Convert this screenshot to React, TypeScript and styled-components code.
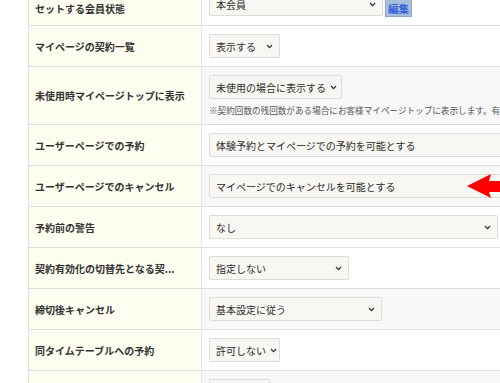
import React from "react";
import styled, { createGlobalStyle } from "styled-components";

const GlobalStyle = createGlobalStyle`
  html, body {
    margin: 0;
    padding: 0;
    background: #ffffff;
    overflow: hidden;
  }
  body {
    font-family: "Noto Sans CJK JP", "Noto Sans", sans-serif;
    color: #333333;
  }
`;

const Page = styled.div`
  width: 500px;
  height: 383px;
  overflow: hidden;
  padding-left: 28px;
  box-sizing: border-box;
`;

const Table = styled.table`
  width: 760px;
  margin-top: -16px;
  border-collapse: collapse;
  border-left: 1px solid #dedede;
`;

const Row = styled.tr`
  border-bottom: 1px solid #dddddd;
`;

const Label = styled.th<{ $shift?: boolean }>`
  width: 173px;
  box-sizing: border-box;
  padding: ${(p) => (p.$shift ? "7px 6px 0" : "0 6px")};
  background: #fdfdf0;
  border-right: 1px solid #e6e6e6;
  text-align: left;
  font-size: 10px;
  font-weight: 600;
  color: #333333;
  white-space: nowrap;
  vertical-align: middle;
`;

const Value = styled.td<{ $alt?: boolean }>`
  position: relative;
  padding: 8px 7px;
  background: ${(p) => (p.$alt ? "#f8f8f8" : "#ffffff")};
  vertical-align: top;
`;

const Controls = styled.div`
  display: flex;
  align-items: flex-start;
  gap: 2px;
`;

const SelectBox = styled.div<{ $width: number }>`
  display: flex;
  align-items: center;
  justify-content: space-between;
  box-sizing: border-box;
  width: ${(p) => p.$width}px;
  height: 24px;
  padding: 0 6px 0 6px;
  background: #f8f7f3;
  border: 1px solid #dcdcdc;
  border-radius: 2px;
  font-size: 10px;
  color: #2b2b2b;
  white-space: nowrap;
  overflow: hidden;
`;

const Chevron = styled.svg`
  flex: none;
  width: 7px;
  height: 5px;
  margin-left: 4px;
`;

const EditButton = styled.div`
  height: 18px;
  margin-top: 7px;
  padding: 0 2px;
  display: flex;
  align-items: flex-end;
  background: #a9bddb;
  border: 1px solid #8fa5c8;
  font-size: 10.5px;
  font-weight: 700;
  color: #2f62d8;
  line-height: 15px;
  box-sizing: border-box;
`;

const Note = styled.div`
  margin-top: 5px;
  font-size: 8.6px;
  color: #555555;
  white-space: nowrap;
`;

const Arrow = styled.svg`
  position: absolute;
  left: 264px;
  top: 7px;
  width: 40px;
  height: 26px;
`;

type Item = {
  label: string;
  value: string;
  width: number;
  alt?: boolean;
  chevron?: boolean;
  edit?: boolean;
  note?: string;
  arrow?: boolean;
};

const items: Item[] = [
  { label: "セットする会員状態", value: "本会員", width: 174, chevron: true, edit: true },
  { label: "マイページの契約一覧", value: "表示する", width: 71, chevron: true },
  {
    label: "未使用時マイページトップに表示",
    value: "未使用の場合に表示する",
    width: 133,
    chevron: true,
    alt: true,
    note: "※契約回数の残回数がある場合にお客様マイページトップに表示します。有効期限内の契約のみ対象です。",
  },
  { label: "ユーザーページでの予約", value: "体験予約とマイページでの予約を可能とする", width: 330 },
  { label: "ユーザーページでのキャンセル", value: "マイページでのキャンセルを可能とする", width: 330, alt: true, arrow: true },
  { label: "予約前の警告", value: "なし", width: 289, chevron: true },
  { label: "契約有効化の切替先となる契...", value: "指定しない", width: 140, chevron: true },
  { label: "締切後キャンセル", value: "基本設定に従う", width: 173, chevron: true, alt: true },
  { label: "同タイムテーブルへの予約", value: "許可しない", width: 71, chevron: true },
  { label: "評価指定", value: "指定なし", width: 61, chevron: true, alt: true },
];

const ChevronIcon = () => (
  <Chevron viewBox="0 0 7 5">
    <path d="M1 1 L3.5 3.6 L6 1" fill="none" stroke="#333" strokeWidth="1.3" />
  </Chevron>
);

export default function App() {
  return (
    <>
      <GlobalStyle />
      <Page>
        <Table>
          <tbody>
            {items.map((it, i) => (
              <Row key={it.label}>
                <Label $shift={i === 0}>{it.label}</Label>
                <Value $alt={it.alt}>
                  <Controls>
                    <SelectBox $width={it.width}>
                      <span>{it.value}</span>
                      {it.chevron && <ChevronIcon />}
                    </SelectBox>
                    {it.edit && <EditButton>編集</EditButton>}
                  </Controls>
                  {it.note && <Note>{it.note}</Note>}
                  {it.arrow && (
                    <Arrow viewBox="0 0 40 26">
                      <path d="M1 13 L25 1 L23 8 L40 8 L40 19 L23 19 L25 25 Z" fill="#ff0000" />
                    </Arrow>
                  )}
                </Value>
              </Row>
            ))}
          </tbody>
        </Table>
      </Page>
    </>
  );
}
